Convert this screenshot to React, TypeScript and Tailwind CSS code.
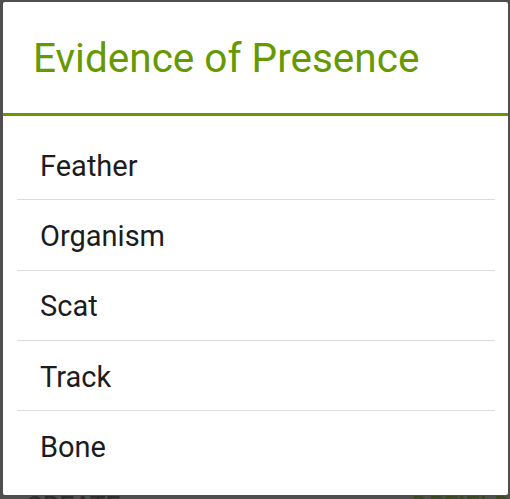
import React from "react";

const items = ["Feather", "Organism", "Scat", "Track", "Bone"];

export default function App() {
  return (
    <div
      className="relative h-[499px] w-[510px] overflow-hidden bg-[#4f4f4f]"
      style={{ fontFamily: "Roboto, 'Noto Sans', sans-serif" }}
    >
      <div className="absolute left-[26px] top-[493px] text-[26px] font-medium leading-none text-[#2e2e2e]">
        CREATE
      </div>
      <div className="absolute left-[412px] top-[493px] text-[26px] font-medium leading-none text-[#3b4a1e]">
        DEFIELD
      </div>
      <div className="relative ml-[3px] mt-[2px] h-[493px] w-[505px] rounded-[2px] bg-white">
        <div className="flex h-[111px] items-center pl-[30px] pt-[2px] text-[40.5px] leading-none text-[#669900]">
          Evidence of Presence
        </div>
        <div className="h-[3px] bg-[#669900]" />
        <div className="ml-[14px] mr-[13px] pt-[14px]">
          {items.map((it, i) => (
            <div
              key={it}
              className={`flex h-[70.3px] items-center pl-[23px] pt-[3px] text-[29px] leading-none text-[#1c1c1c] ${
                i < items.length - 1 ? "border-b border-[#dcdcdc]" : ""
              }`}
            >
              {it}
            </div>
          ))}
        </div>
      </div>
    </div>
  );
}
